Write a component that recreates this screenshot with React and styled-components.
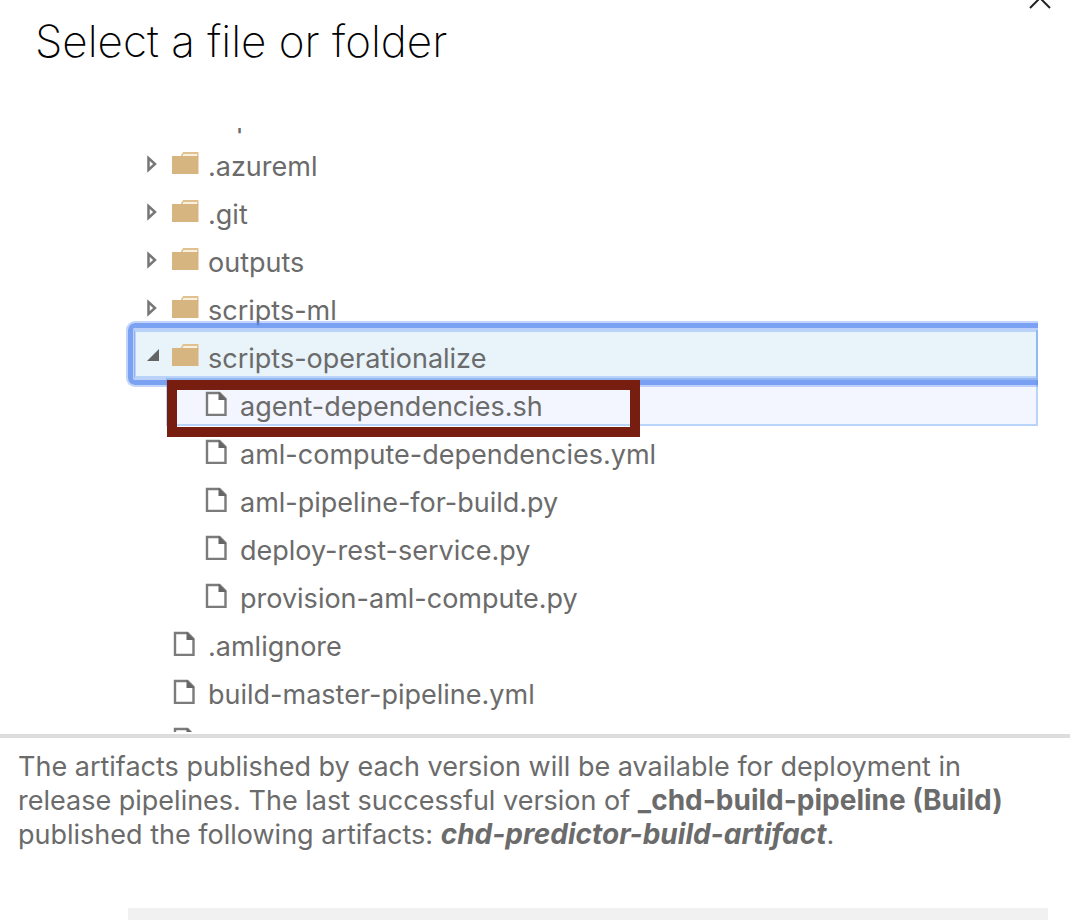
import React from "react";
import styled, { createGlobalStyle } from "styled-components";

const Global = createGlobalStyle`
  *, *::before, *::after { box-sizing: border-box; }
  body { margin: 0; background: #fff; font-family: Inter, "Liberation Sans", sans-serif; }
`;

const Dialog = styled.main`
  display: flex;
  flex-direction: column;
  height: 100vh;
  overflow: hidden;
  color: #6b6b6b;
  font-size: 27px;
`;

const Header = styled.header`
  display: flex;
  flex: none;
  justify-content: space-between;
  align-items: flex-start;
  height: 128px;
  padding: 16px 18px 0 35px;
`;

const Title = styled.h1`
  margin: 0;
  color: #000;
  font-size: 44px;
  line-height: 50px;
  font-weight: 250;
`;

const CloseButton = styled.button`
  width: 24px;
  height: 24px;
  margin-top: -30px;
  padding: 0;
  border: 0;
  background: none;
  svg { display: block; }
`;

const TreePane = styled.section`
  flex: 1 1 0;
  min-height: 0;
  overflow: hidden;
`;

const Tree = styled.ul`
  margin: -38px 32px 0 102px;
  padding: 0;
  list-style: none;
`;

const Branch = styled.ul`
  position: relative;
  margin: 0;
  padding: 0 0 0 32px;
  list-style: none;
`;

const Row = styled.button`
  position: relative;
  display: flex;
  align-items: center;
  width: 100%;
  height: 48px;
  padding: 0;
  border: 2px solid ${(p) => (p.$state ? "#b9d4f8" : "transparent")};
  background: ${(p) => ({ focused: "#e8f3fa", hovered: "#f3f6ff" })[p.$state] || "none"};
  z-index: ${(p) => (p.$state === "focused" ? 1 : "auto")};
  color: inherit;
  font: inherit;
  text-align: left;
  outline: none;
  svg { flex: none; display: block; }
`;

const FocusRing = styled.span`
  position: absolute;
  inset: -11px -2px -11px -10px;
  border: 2px solid rgba(90, 138, 241, 0.36);
  border-right: 0;
  border-radius: 9px 0 0 9px;
  &::before {
    content: "";
    position: absolute;
    inset: 0;
    border: 5px solid rgba(90, 138, 241, 0.8);
    border-right: 0;
    border-radius: 7px 0 0 7px;
    box-shadow: inset 0 0 0 2px rgba(90, 138, 241, 0.4);
  }
`;

const Label = styled.span`
  padding: 10px 0 0 8px;
  line-height: 34px;
  white-space: nowrap;
`;

const ArrowSlot = styled.span`
  flex: none;
  width: 36px;
`;

const Marker = styled.li`
  position: absolute;
  top: 2px;
  left: 33px;
  width: 473px;
  height: 57px;
  border: 10px solid #771e10;
  z-index: 2;
  pointer-events: none;
`;

const Details = styled.section`
  flex: none;
  margin-top: 2px;
  padding: 12px 18px 0;
  border-top: 4px solid #ddd;
`;

const Summary = styled.p`
  margin: 0 0 56px;
  line-height: 34px;
  b { font-size: 28px; line-height: 1; font-weight: 700; }
`;

const BottomBar = styled.div`
  height: 12px;
  margin: 0 4px 0 110px;
  background: #f1f1f1;
`;

const Arrow = ({ open }) => (
  <svg width="36" height="28" viewBox="0 0 36 28" aria-hidden="true">
    {open ? (
      <path d="M23 9V21H11Z" fill="#646464" />
    ) : (
      <path d="M12.500 10V22L19 16Z" fill="#fff" stroke="#777" strokeWidth="2.500" />
    )}
  </svg>
);

const Folder = () => (
  <svg width="28" height="28" viewBox="0 0 28 28" aria-hidden="true">
    <path d="M8 9L11 4H26.500V9Z" fill="#dfc28f" />
    <path d="M11.500 6H25V8H10.500Z" fill="#f8f0e2" />
    <path d="M0 8H26.500V26H0Z" fill="#d6b580" />
  </svg>
);

const File = () => (
  <svg width="28" height="28" viewBox="0 0 28 28" aria-hidden="true">
    <path d="M3 5H15.500L21.500 11V27H3Z" fill="#fff" stroke="#7b7b7b" strokeWidth="2.400" />
    <path d="M14.500 4V12H22.500Z" fill="#666" />
  </svg>
);

const Item = ({ name, folder, open, state, children }) => (
  <li role="treeitem" aria-expanded={folder ? !!open : undefined}>
    <Row type="button" $state={state}>
      {state === "focused" && <FocusRing />}
      {folder ? <Arrow open={open} /> : <ArrowSlot />}
      {folder ? <Folder /> : <File />}
      <Label>{name}</Label>
    </Row>
    {children}
  </li>
);

export default function App() {
  return (
    <Dialog>
      <Global />
      <Header>
        <Title>Select a file or folder</Title>
        <CloseButton type="button" aria-label="Close">
          <svg width="24" height="24" viewBox="0 0 24 24">
            <path d="M2 2L22 22M22 2L2 22" stroke="#222" strokeWidth="2" />
          </svg>
        </CloseButton>
      </Header>
      <TreePane>
        <Tree role="tree">
          <Item name="chd-predictor-build-artifact" folder open>
            <Branch role="group">
              <Item name=".azureml" folder />
              <Item name=".git" folder />
              <Item name="outputs" folder />
              <Item name="scripts-ml" folder />
              <Item name="scripts-operationalize" folder open state="focused">
                <Branch role="group">
                  <Item name="agent-dependencies.sh" state="hovered" />
                  <Item name="aml-compute-dependencies.yml" />
                  <Item name="aml-pipeline-for-build.py" />
                  <Item name="deploy-rest-service.py" />
                  <Item name="provision-aml-compute.py" />
                  <Marker aria-hidden="true" />
                </Branch>
              </Item>
              <Item name=".amlignore" />
              <Item name="build-master-pipeline.yml" />
              <Item name="README.md" />
            </Branch>
          </Item>
        </Tree>
      </TreePane>
      <Details>
        <Summary>
          The artifacts published by each version will be available for deployment in release
          pipelines. The last successful version of <b>_chd-build-pipeline (Build)</b> published
          the following artifacts: <b><i>chd-predictor-build-artifact</i></b>.
        </Summary>
        <BottomBar />
      </Details>
    </Dialog>
  );
}
